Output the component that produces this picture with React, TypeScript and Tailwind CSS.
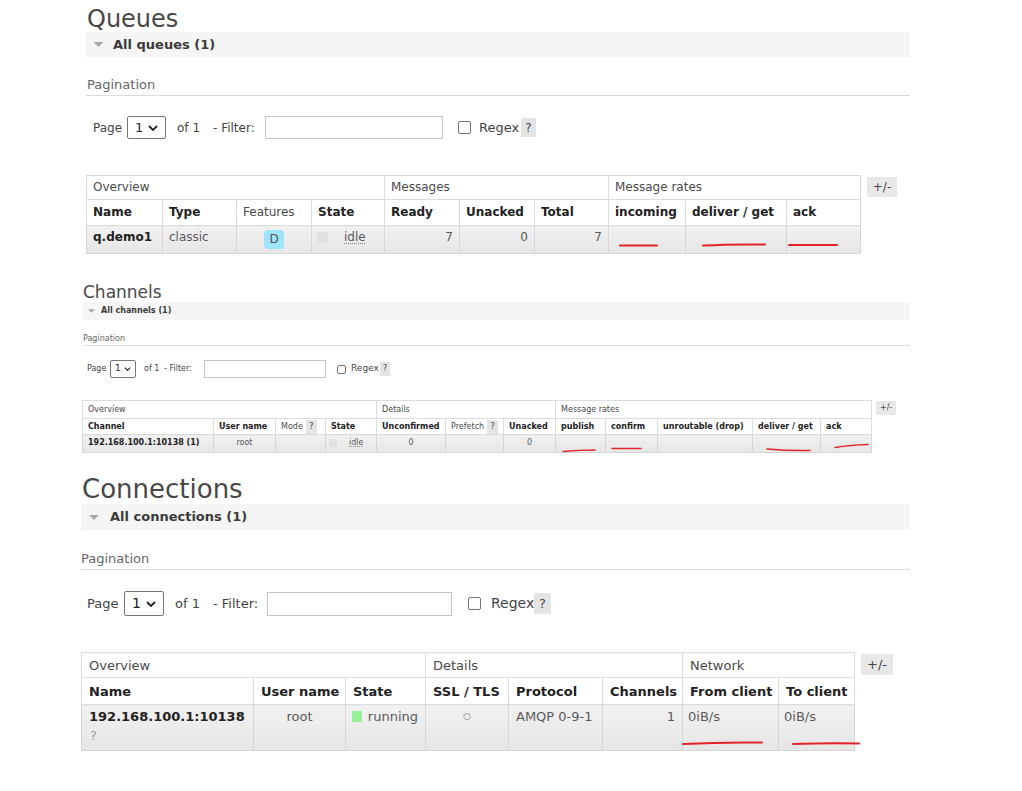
import type { ReactNode } from 'react'

type Col = { w: string; head: ReactNode; thin?: boolean; cell?: ReactNode; cc?: string }
type GridSz = { w: string; text: string; px: string; r1: string; r2: string; r3: string; pt: string; btn: string }

function Grid({ sz, groups, cols }: { sz: GridSz; groups: { label: string; span: number }[]; cols: Col[] }) {
  return (
    <div className="flex items-start">
      <table className={`table-fixed border-collapse ${sz.w} ${sz.text}`}>
        <colgroup>
          {cols.map((c, i) => <col key={i} className={c.w} />)}
        </colgroup>
        <tbody>
          <tr className={sz.r1}>
            {groups.map(g => (
              <td key={g.label} colSpan={g.span} className={`border border-[#dcdcdc] bg-white align-middle text-[#4a4a4a] ${sz.px}`}>{g.label}</td>
            ))}
          </tr>
          <tr className={sz.r2}>
            {cols.map((c, i) => (
              <th key={i} className={`border border-[#dcdcdc] bg-white align-middle text-left whitespace-nowrap ${sz.px} ${c.thin ? 'font-normal text-[#4a4a4a]' : 'font-bold text-[#222]'}`}>{c.head}</th>
            ))}
          </tr>
          <tr className={sz.r3}>
            {cols.map((c, i) => (
              <td key={i} className={`border border-[#d6d6d6] bg-linear-to-b from-[#f1f1f1] to-[#e6e6e6] align-top whitespace-nowrap text-[#5a5a5a] ${sz.px} ${sz.pt} ${c.cc ?? ''}`}>{c.cell}</td>
            ))}
          </tr>
        </tbody>
      </table>
      <div className={`flex items-center justify-center bg-[#e8e8e8] text-[#444] ${sz.btn}`}>+/-</div>
    </div>
  )
}

function Tri({ cls }: { cls: string }) {
  return (
    <svg className={cls} viewBox="0 0 12 6">
      <polygon points="0,0 12,0 6,6" fill="#a9a9a9" />
    </svg>
  )
}

function Chevron({ cls }: { cls: string }) {
  return (
    <svg className={cls} viewBox="0 0 10 6" fill="none">
      <polyline points="1,1 5,5 9,1" stroke="#222" strokeWidth="1.8" />
    </svg>
  )
}

function Help({ cls }: { cls: string }) {
  return <span className={`inline-flex items-center justify-center bg-[#e4e4e4] text-[#444] ${cls}`}>?</span>
}

function Marks() {
  return (
    <svg className="absolute inset-0 pointer-events-none" width="1022" height="791" fill="none" stroke="#e3232a" strokeWidth="2" strokeLinecap="round">
      <path d="M620 245.5 L657 245.5" />
      <path d="M703 245.5 Q730 244 765 244.5" />
      <path d="M789 245 L837 245" />
      <path d="M563 451.5 Q578 450 595 450" strokeWidth="1.5" />
      <path d="M612 448.5 L641 448.5" strokeWidth="1.5" />
      <path d="M767 449 Q790 451 810 450.5" strokeWidth="1.5" />
      <path d="M835 447.5 Q850 445 868 444.5" strokeWidth="1.5" />
      <path d="M683 744 Q720 742 762 742.5" />
      <path d="M793 744 Q825 743 859 743.5" />
    </svg>
  )
}

export default function App() {
  return (
    <div className="relative w-[1022px] h-[791px] bg-white overflow-hidden font-['DejaVu_Sans',Verdana,sans-serif] text-[#444]">
      {/* Queues */}
      <section className="ml-[86px] w-[824px]">
        <h1 className="h-[32px] leading-[39px] text-[24px] font-normal text-[#484848] pl-[1px]">Queues</h1>
        <div className="h-[25px] bg-[#f5f5f5] flex items-center pl-[7px]">
          <Tri cls="w-[11px] h-[5px]" />
          <span className="ml-[9px] text-[13px] font-bold text-[#3a3a3a]">All queues (1)</span>
        </div>
        <div className="mt-[18px] h-[21px] leading-[20px] border-b border-[#dcdcdc] text-[13px] text-[#666] pl-[1px]">Pagination</div>
        <div className="mt-[20px] h-[23px] flex items-center text-[12px] text-[#444] pl-[7px]">
          <span className="w-[34px]">Page</span>
          <div className="w-[39px] h-[23px] border border-[#767676] rounded-[2px] flex items-center justify-between px-[7px] text-[13px] text-[#222]">
            <span>1</span>
            <Chevron cls="w-[10px] h-[6px]" />
          </div>
          <span className="ml-[11px] w-[36px]">of 1</span>
          <span className="w-[52px]">- Filter:</span>
          <div className="w-[178px] h-[23px] border border-[#c4c4c4] bg-white" />
          <span className="ml-[15px] w-[13px] h-[13px] border border-[#767676] rounded-[2px] bg-white" />
          <span className="ml-[8px] w-[42px] text-[13px]">Regex</span>
          <Help cls="w-[15px] h-[19px] text-[12px]" />
        </div>
        <div className="mt-[36px]">
          <Grid
            sz={{ w: 'w-[774px]', text: 'text-[12px] leading-[15px]', px: 'px-[6px]', r1: 'h-[24px]', r2: 'h-[26px]', r3: 'h-[28px]', pt: 'pt-[4px]', btn: 'ml-[6px] mt-[2px] w-[30px] h-[20px] text-[12px]' }}
            groups={[{ label: 'Overview', span: 4 }, { label: 'Messages', span: 3 }, { label: 'Message rates', span: 3 }]}
            cols={[
              { w: 'w-[76px]', head: 'Name', cell: <span className="font-bold text-[#222]">q.demo1</span> },
              { w: 'w-[74px]', head: 'Type', cell: 'classic' },
              { w: 'w-[75px]', head: 'Features', thin: true, cell: <div className="flex justify-center"><span className="w-[20px] h-[19px] rounded-[4px] bg-[#9ce5fa] flex items-center justify-center text-[#555]">D</span></div> },
              { w: 'w-[73px]', head: 'State', cc: 'pl-[5px]', cell: <div className="flex items-center h-[15px]"><span className="w-[11px] h-[11px] bg-[#e1e1e1]" /><span className="ml-[16px] underline decoration-dotted decoration-[#888] underline-offset-2">idle</span></div> },
              { w: 'w-[75px]', head: 'Ready', cc: 'text-right', cell: '7' },
              { w: 'w-[75px]', head: 'Unacked', cc: 'text-right', cell: '0' },
              { w: 'w-[74px]', head: 'Total', cc: 'text-right', cell: '7' },
              { w: 'w-[77px]', head: 'incoming' },
              { w: 'w-[101px]', head: 'deliver / get' },
              { w: 'w-[74px]', head: 'ack' },
            ]}
          />
        </div>
      </section>

      {/* Channels */}
      <section className="ml-[82px] w-[828px] mt-[27px]">
        <h2 className="h-[21px] leading-[22px] text-[17px] font-normal text-[#484848] pl-[1px]">Channels</h2>
        <div className="ml-[1px] h-[18px] bg-[#f5f5f5] flex items-center pl-[5px]">
          <Tri cls="w-[7px] h-[4px]" />
          <span className="ml-[6px] text-[8px] font-bold text-[#3a3a3a]">All channels (1)</span>
        </div>
        <div className="ml-[1px] mt-[13px] h-[13px] leading-[12px] border-b border-[#dcdcdc] text-[8px] text-[#666]">Pagination</div>
        <div className="mt-[14px] h-[18px] flex items-center text-[8px] text-[#444] pl-[5px]">
          <span className="w-[23px]">Page</span>
          <div className="w-[26px] h-[18px] border border-[#767676] rounded-[2px] flex items-center justify-between px-[4px] text-[9px] text-[#222]">
            <span>1</span>
            <Chevron cls="w-[7px] h-[4px]" />
          </div>
          <span className="ml-[8px] w-[20px]">of 1</span>
          <span className="w-[40px]">- Filter:</span>
          <div className="w-[122px] h-[18px] border border-[#c4c4c4] bg-white" />
          <span className="ml-[11px] w-[9px] h-[9px] border border-[#767676] rounded-[2px] bg-white" />
          <span className="ml-[5px] w-[29px] text-[9px]">Regex</span>
          <Help cls="w-[10px] h-[14px] text-[8px]" />
        </div>
        <div className="mt-[22px]">
          <Grid
            sz={{ w: 'w-[789px]', text: 'text-[8px] leading-[11px]', px: 'px-[5px]', r1: 'h-[18px]', r2: 'h-[16px]', r3: 'h-[18px]', pt: 'pt-[2px]', btn: 'ml-[4px] mt-[1px] w-[20px] h-[14px] text-[8px]' }}
            groups={[{ label: 'Overview', span: 4 }, { label: 'Details', span: 3 }, { label: 'Message rates', span: 5 }]}
            cols={[
              { w: 'w-[131px]', head: 'Channel', cell: <span className="font-bold text-[#222]">192.168.100.1:10138 (1)</span> },
              { w: 'w-[62px]', head: 'User name', cc: 'text-center', cell: 'root' },
              { w: 'w-[50px]', head: <span className="flex items-center">Mode<Help cls="ml-[3px] w-[11px] h-[14px] text-[8px]" /></span>, thin: true },
              { w: 'w-[51px]', head: 'State', cc: 'pl-[3px]', cell: <div className="flex items-center h-[11px]"><span className="w-[8px] h-[8px] bg-[#e1e1e1]" /><span className="ml-[12px] underline decoration-dotted decoration-[#888]">idle</span></div> },
              { w: 'w-[69px]', head: 'Unconfirmed', cc: 'text-center', cell: '0' },
              { w: 'w-[58px]', head: <span className="flex items-center">Prefetch<Help cls="ml-[3px] w-[11px] h-[14px] text-[8px]" /></span>, thin: true },
              { w: 'w-[52px]', head: 'Unacked', cc: 'text-center', cell: '0' },
              { w: 'w-[50px]', head: 'publish' },
              { w: 'w-[52px]', head: 'confirm' },
              { w: 'w-[95px]', head: 'unroutable (drop)' },
              { w: 'w-[68px]', head: 'deliver / get' },
              { w: 'w-[51px]', head: 'ack' },
            ]}
          />
        </div>
      </section>

      {/* Connections */}
      <section className="ml-[81px] w-[829px] mt-[17px]">
        <h2 className="h-[34px] leading-[38px] text-[26px] font-normal text-[#484848] pl-[1px]">Connections</h2>
        <div className="h-[26px] bg-[#f5f5f5] flex items-center pl-[7px]">
          <Tri cls="w-[12px] h-[5px]" />
          <span className="ml-[10px] text-[13px] font-bold text-[#3a3a3a]">All connections (1)</span>
        </div>
        <div className="mt-[19px] h-[21px] leading-[20px] border-b border-[#dcdcdc] text-[13px] text-[#666]">Pagination</div>
        <div className="mt-[21px] h-[25px] flex items-center text-[13px] text-[#444] pl-[6px]">
          <span className="w-[37px]">Page</span>
          <div className="w-[40px] h-[25px] border border-[#767676] rounded-[2px] flex items-center justify-between px-[7px] text-[14px] text-[#222]">
            <span>1</span>
            <Chevron cls="w-[10px] h-[6px]" />
          </div>
          <span className="ml-[11px] w-[38px]">of 1</span>
          <span className="w-[54px]">- Filter:</span>
          <div className="w-[185px] h-[24px] border border-[#c4c4c4] bg-white" />
          <span className="ml-[16px] w-[13px] h-[13px] border border-[#767676] rounded-[2px] bg-white" />
          <span className="ml-[10px] w-[43px] text-[14px]">Regex</span>
          <Help cls="w-[17px] h-[21px] text-[13px]" />
        </div>
        <div className="mt-[36px]">
          <Grid
            sz={{ w: 'w-[773px]', text: 'text-[13px] leading-[19px]', px: 'px-[7px]', r1: 'h-[25px]', r2: 'h-[27px]', r3: 'h-[46px]', pt: 'pt-[2px]', btn: 'ml-[6px] mt-[2px] w-[32px] h-[21px] text-[13px]' }}
            groups={[{ label: 'Overview', span: 3 }, { label: 'Details', span: 3 }, { label: 'Network', span: 2 }]}
            cols={[
              { w: 'w-[172px]', head: 'Name', cell: <div><div className="font-bold text-[#222]">192.168.100.1:10138</div><div className="text-[#999] pl-[1px]">?</div></div> },
              { w: 'w-[92px]', head: 'User name', cc: 'text-center', cell: 'root' },
              { w: 'w-[80px]', head: 'State', cc: 'pl-[6px]', cell: <div className="flex items-center h-[19px]"><span className="w-[11px] h-[11px] bg-[#98f098]" /><span className="ml-[6px]">running</span></div> },
              { w: 'w-[83px]', head: 'SSL / TLS', cc: 'text-center text-[9px]', cell: <span className="text-[#777] leading-[19px]">○</span> },
              { w: 'w-[94px]', head: 'Protocol', cell: 'AMQP 0-9-1' },
              { w: 'w-[80px]', head: 'Channels', cc: 'text-right', cell: '1' },
              { w: 'w-[96px]', head: 'From client', cc: 'pl-[5px]', cell: '0iB/s' },
              { w: 'w-[76px]', head: 'To client', cc: 'pl-[5px]', cell: '0iB/s' },
            ]}
          />
        </div>
      </section>

      <Marks />
    </div>
  )
}
